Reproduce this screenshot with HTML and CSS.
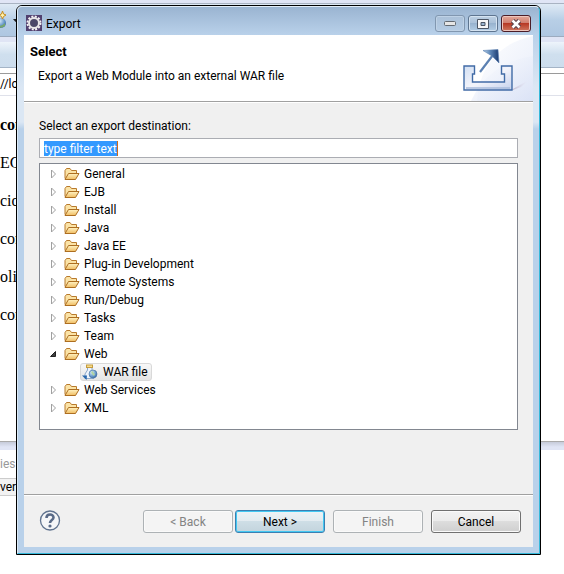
FILE: index.html
```html
<!DOCTYPE html>
<html lang="en">
<head>
<meta charset="utf-8">
<title>Export</title>
<link rel="stylesheet" href="styles.css">
</head>
<body>
<svg class="defs" aria-hidden="true">
  <defs>
    <linearGradient id="gold" x1="0" y1="0" x2="0" y2="1"><stop offset="0" stop-color="#fff3c4"/><stop offset="1" stop-color="#f0bd62"/></linearGradient>
    <linearGradient id="tray" x1="0" y1="0" x2="1" y2="1"><stop offset="0" stop-color="#d3e0f3"/><stop offset=".5" stop-color="#f3f4fb"/><stop offset="1" stop-color="#c5d1ec"/></linearGradient>
    <linearGradient id="arrow" x1="0" y1="0" x2="1" y2="0"><stop offset="0" stop-color="#b9d4ec"/><stop offset=".45" stop-color="#5f88b8"/><stop offset="1" stop-color="#18386f"/></linearGradient>
    <linearGradient id="shade" x1="0" y1="0" x2="1" y2="0"><stop offset="0" stop-color="#b9b0c6"/><stop offset="1" stop-color="#e6e6f5" stop-opacity="0"/></linearGradient>
    <linearGradient id="sky" x1="0" y1="0" x2="1" y2="1"><stop offset="0" stop-color="#fff"/><stop offset="1" stop-color="#d6dff5"/></linearGradient>
    <radialGradient id="globe" cx=".35" cy=".3" r=".8"><stop offset="0" stop-color="#d8ecf8"/><stop offset=".6" stop-color="#6a9acb"/><stop offset="1" stop-color="#35639f"/></radialGradient>
    <symbol id="folder" viewBox="0 0 16 14">
      <path d="M1 11.500V3.500L2.500 1.500H6L7.500 3.500H12.500V6" fill="#fbe3a6" stroke="#b87a2c"/>
      <path d="M1 12.500L4.500 6.500H15L11.500 12.500Z" fill="url(#gold)" stroke="#ad6e21" stroke-linejoin="round"/>
    </symbol>
    <symbol id="closed" viewBox="0 0 8 10"><path d="M1.500 1V9L5.500 5Z" fill="#fff" stroke="#a0a0a0"/></symbol>
    <symbol id="open" viewBox="0 0 8 10"><path d="M5.500 2.500V7.500H.500Z" fill="#404040" stroke="#222"/></symbol>
  </defs>
</svg>

<main class="workbench">
  <div class="menu-strip"></div>
  <div class="toolbar">
    <svg class="new-icon" width="8" height="18" viewBox="0 0 8 18"><circle cx="1" cy="12" r="5" fill="url(#globe)"/><path d="M-3 13Q1 17 5 12L5 15 1 17Z" fill="#78a86c"/><path d="M2.500 0L3.500 3 6 4 3.500 5.500 2.500 8 1.500 5.500-1 4 1.500 3Z" fill="#fff2a8" stroke="#c68b20"/></svg>
    <svg class="caret" width="5" height="3" viewBox="0 0 5 3"><path d="M0 0H5L2.500 3Z" fill="#222"/></svg>
  </div>
  <div class="gap-strip"></div>
  <div class="tab-strip"></div>
  <div class="address">//lo</div>
  <div class="document">
    <p><b>con</b></p><p>EC</p><p>cio</p><p>con</p><p>olieg</p><p>con</p>
  </div>
  <div class="sash"></div>
  <div class="view-tabs">ies</div>
  <div class="server-row">ver</div>
</main>

<section class="dialog" role="dialog" aria-labelledby="dialog-title">
  <div class="glass">
    <header class="titlebar">
      <svg class="app-icon" width="16" height="16" viewBox="0 0 16 16"><rect width="16" height="16" fill="#51406f"/><circle cx="8" cy="8" r="6.500" fill="none" stroke="#f4f2f4" stroke-width="2" stroke-dasharray="2 1.400"/><circle cx="8" cy="8" r="5" fill="#5c5870" stroke="#e8e6e8" stroke-width="2"/><circle cx="8" cy="8" r="3.500" fill="#4a4668"/></svg>
      <span class="caption" id="dialog-title">Export</span>
      <button class="win-btn minimize" aria-label="Minimize"><svg width="12" height="5" viewBox="0 0 12 5"><rect x=".5" y=".5" width="11" height="4" rx="1" fill="#e6e6e6" stroke="#636a72"/></svg></button>
      <button class="win-btn" aria-label="Maximize"><svg width="12" height="10" viewBox="0 0 12 10"><path fill-rule="evenodd" d="M.5.500H11.500V9.500H.5ZM4 3.500V6.500H8V3.500Z" fill="#f8f8f8" stroke="#4c5665"/></svg></button>
      <button class="win-btn close" aria-label="Close"><svg width="12" height="10" viewBox="0 0 12 10"><path d="M2.500 1.500L9.500 8.500M9.500 1.500L2.500 8.500" stroke="#59434b" stroke-width="4.600"/><path d="M2.500 1.500L9.500 8.500M9.500 1.500L2.500 8.500" stroke="#fff" stroke-width="2.500"/></svg></button>
    </header>
    <div class="client">
      <div class="banner">
        <div class="banner-text"><h1>Select</h1><p>Export a Web Module into an external WAR file</p></div>
        <svg class="banner-art" width="76" height="66" viewBox="0 0 76 66">
          <path d="M20 66C22 32 42 8 76 1V66Z" fill="url(#sky)" opacity=".6"/>
          <path d="M14 66C26 40 47 25 76 21V66Z" fill="url(#sky)" opacity=".7"/>
          <path d="M54 55L72 45 64 52 56 55Z" fill="url(#shade)"/>
          <path d="M7 31H17.500V39H15.500V47H47.500V39H44.500V31H55V55H7Z" fill="url(#tray)" stroke="#416ba6" stroke-width="1.400"/>
          <path d="M9 53H53" stroke="#a9bbdb" stroke-width="1.500"/>
          <path d="M23 37L36 20" stroke="#5b80b2" stroke-width="2.200"/>
          <path d="M26 15.500L41 14.500 42 28 35 21Z" fill="url(#arrow)" stroke="#5d82b2" stroke-width=".6"/>
        </svg>
      </div>
      <form class="body">
        <label for="filter">Select an export destination:</label>
        <div class="filter"><input id="filter" type="text" value="type filter text"></div>
        <ul class="tree" role="tree">
          <li><svg class="twisty"><use href="#closed"/></svg><svg class="folder"><use href="#folder"/></svg>General</li>
          <li><svg class="twisty"><use href="#closed"/></svg><svg class="folder"><use href="#folder"/></svg>EJB</li>
          <li><svg class="twisty"><use href="#closed"/></svg><svg class="folder"><use href="#folder"/></svg>Install</li>
          <li><svg class="twisty"><use href="#closed"/></svg><svg class="folder"><use href="#folder"/></svg>Java</li>
          <li><svg class="twisty"><use href="#closed"/></svg><svg class="folder"><use href="#folder"/></svg>Java EE</li>
          <li><svg class="twisty"><use href="#closed"/></svg><svg class="folder"><use href="#folder"/></svg>Plug-in Development</li>
          <li><svg class="twisty"><use href="#closed"/></svg><svg class="folder"><use href="#folder"/></svg>Remote Systems</li>
          <li><svg class="twisty"><use href="#closed"/></svg><svg class="folder"><use href="#folder"/></svg>Run/Debug</li>
          <li><svg class="twisty"><use href="#closed"/></svg><svg class="folder"><use href="#folder"/></svg>Tasks</li>
          <li><svg class="twisty"><use href="#closed"/></svg><svg class="folder"><use href="#folder"/></svg>Team</li>
          <li><svg class="twisty"><use href="#open"/></svg><svg class="folder"><use href="#folder"/></svg>Web</li>
          <li class="child"><span class="selected"><svg width="16" height="16" viewBox="0 0 16 16"><path d="M5.500 3.500V6L3 10V14.500H12V8L10 6V3.500Z" fill="#edf3fa" stroke="#8ca8cb"/><rect x="4.500" y="1" width="6" height="2.500" fill="#f8dc8a" stroke="#c49b3d"/><circle cx="11" cy="10" r="4" fill="url(#globe)" stroke="#426e9f" stroke-width=".6"/><path d="M9 8L11 7 11.500 9 13 10 12 12 10 10Z" fill="#b2d6a2"/><path d="M0 11.500H5L4.500 16Z" fill="#2868ad"/></svg>WAR file</span></li>
          <li><svg class="twisty"><use href="#closed"/></svg><svg class="folder"><use href="#folder"/></svg>Web Services</li>
          <li><svg class="twisty"><use href="#closed"/></svg><svg class="folder"><use href="#folder"/></svg>XML</li>
        </ul>
      </form>
      <footer class="actions">
        <button class="help" aria-label="Help"><svg width="22" height="22" viewBox="0 0 22 22"><circle cx="11" cy="10.500" r="9.500" fill="#f5f6f8" stroke="#60738f" stroke-width="1.300"/><path d="M7.500 8C7.500 3.500 14.500 3.500 14.500 7.500 14.500 10 11 10 11 13" fill="none" stroke="#5a6b88" stroke-width="2.600"/><circle cx="11" cy="16" r="1.600" fill="#5a6b88"/></svg></button>
        <button class="push" disabled>&lt; Back</button>
        <button class="push default">Next &gt;</button>
        <button class="push spaced" disabled>Finish</button>
        <button class="push spaced">Cancel</button>
      </footer>
    </div>
  </div>
</section>
</body>
</html>
```
FILE: styles.css
```css
* { box-sizing: border-box; }
body {
  margin: 0;
  background: #fff;
  color: #000;
  font: 12px/18px Roboto, "Open Sans", sans-serif;
  overflow: hidden;
}
svg { display: block; flex: none; }
p, h1, ul { margin: 0; padding: 0; }
button { font: inherit; color: inherit; padding: 0; }
.defs { position: absolute; width: 0; height: 0; }

/* workbench behind the dialog */
.menu-strip { height: 3px; background: #e0e5f5; }
.toolbar {
  display: flex;
  align-items: center;
  gap: 5px;
  height: 34px;
  border-top: 1px solid #a9b3c2;
  border-bottom: 1px solid #9cabbf;
  background: linear-gradient(#dfeaf5, #b8cfe6 50%, #aec7e1);
}
.gap-strip { height: 5px; background: #e0e5f5; }
.tab-strip {
  height: 26px;
  border-bottom: 1px solid #a4b4c6;
  background: linear-gradient(#eef4fb, #cfdfee 50%, #cddded);
}
.address {
  height: 28px;
  padding-top: 7px;
  border-bottom: 1px solid #dfe1ea;
  background: linear-gradient(#fff 5px, #9a9a9a 5px, #9a9a9a 6px, #fff 6px);
}
.document {
  height: 345px;
  padding-top: 10px;
  font: 16px/38px "Liberation Serif", serif;
}
.sash {
  height: 9px;
  border-top: 1px solid #aaa;
  background: linear-gradient(#c6cbda, #e0e5f5 5px);
}
.view-tabs { height: 28px; padding-top: 5px; color: #999; }
.server-row {
  height: 18px;
  width: 16px;
  border: solid #ccc;
  border-width: 1px 0;
  background: #f2f2f2;
  line-height: 16px;
}

/* dialog frame */
.dialog {
  position: absolute;
  top: 5px;
  left: 16px;
  right: 23px;
  border: 1px solid #000;
  border-radius: 6px 6px 0 0;
}
.glass {
  padding: 0 6px 6px;
  border: 1px solid #35b9da;
  border-top-color: #e2edf7;
  border-left-color: #dcebf7;
  border-radius: 5px 5px 0 0;
  background: linear-gradient(#9ab4d1, #b9d1ea 28px, #dbe7f4 80px, #dbe7f4 115px, #b9d1ea 122px);
}
.titlebar { display: flex; height: 28px; gap: 3px; padding: 8px 2px 0; }
.caption { flex: 1; line-height: 18px; }
.app-icon { margin-right: 1px; }
.win-btn {
  display: grid;
  place-items: center;
  width: 30px;
  height: 17px;
  border: 1px solid #5e7590;
  border-radius: 3px;
  background: linear-gradient(#bdd0e3, #a9c0d8 50%, #98b3cf 50%, #b2cde5);
  box-shadow: inset 0 0 0 1px #d5e3f1;
}
.minimize {
  border-color: #8197b0;
  background: linear-gradient(#abc1d9, #b5cce4);
  box-shadow: inset 0 0 0 1px #bfd2e6;
}
.close {
  border-color: #4b1d28;
  background: linear-gradient(#e3a799, #cf7b6c 50%, #b73925 50%, #d07860);
  box-shadow: inset 0 0 0 1px #eec6bd;
}
.client { background: #f0f0f0; }

.banner {
  display: flex;
  justify-content: space-between;
  height: 67px;
  border-bottom: 1px solid #a0a0a0;
  background: #fff;
}
.banner-text { padding: 8px 6px; }
h1 { font-size: 13px; line-height: 18px; }
.banner p { padding: 6px 8px; }

.body { display: block; padding: 14px 15px 15px; border-top: 1px solid #fff; }
.body label { display: block; }
.filter { margin: 3px 0 5px; padding: 2px 4px 1px; border: 1px solid #abadb3; background: #fff; }
.filter input {
  display: block;
  width: 74px;
  height: 15px;
  padding: 0;
  border: 0;
  border-right: 1px solid #d06a18;
  outline: 0;
  background: #39f;
  color: #fff;
  font: inherit;
}
.tree {
  height: 267px;
  padding: 1px 10px;
  border: 1px solid #828790;
  background: #fff;
  list-style: none;
}
.tree li { display: flex; align-items: center; height: 18px; }
.twisty { width: 8px; height: 10px; margin-right: 6px; }
.folder { width: 16px; height: 14px; margin-right: 4px; }
.child { padding-left: 30px; }
.selected {
  display: flex;
  align-items: center;
  gap: 5px;
  height: 18px;
  padding: 0 3px 0 1px;
  border: 1px solid #d9d9d9;
  border-radius: 3px;
  background: linear-gradient(#f8f8f8, #e5e5e5);
}

.actions {
  display: flex;
  align-items: flex-start;
  gap: 2px;
  margin-top: 49px;
  padding: 15px 12px 14px 15px;
  border-top: 1px solid #a0a0a0;
  box-shadow: inset 0 1px #fff;
}
.help { margin-right: auto; border: 0; background: none; }
.push {
  width: 90px;
  height: 23px;
  border: 1px solid #707070;
  border-radius: 3px;
  background: linear-gradient(#f2f2f2, #ebebeb 50%, #ddd 50%, #cfcfcf);
  box-shadow: inset 0 0 0 1px #fafafa;
}
.push.spaced { margin-left: 6px; }
.push:disabled { border-color: #adb2b5; background: #f4f4f4; color: #838383; }
.push.default {
  border-color: #3c7fb1;
  background: linear-gradient(#edf3f6, #e2ebf0 50%, #cedee6 50%, #c3d4dd);
  box-shadow: inset 0 0 0 1px #43c8f2;
}
```
